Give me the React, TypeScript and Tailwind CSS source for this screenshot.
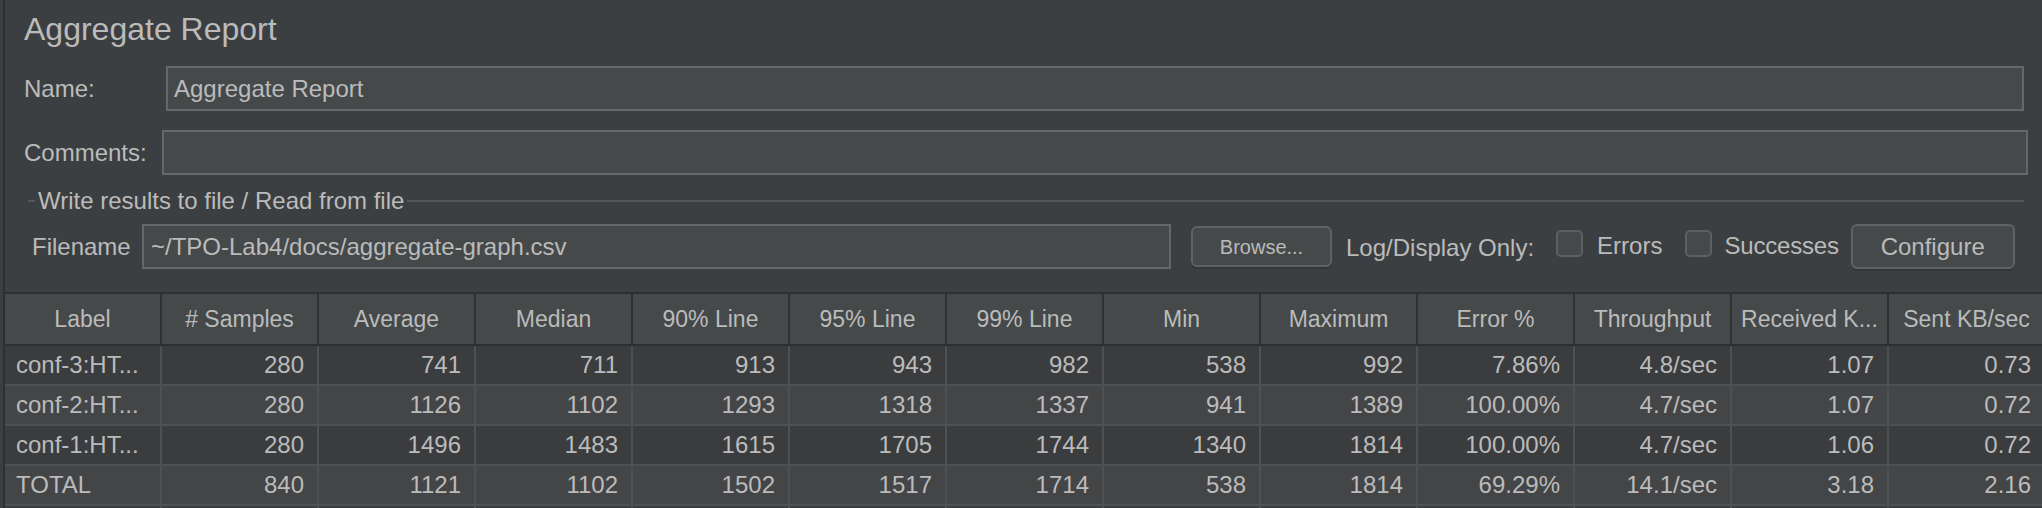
import React from "react";

const cols = [
  "Label",
  "# Samples",
  "Average",
  "Median",
  "90% Line",
  "95% Line",
  "99% Line",
  "Min",
  "Maximum",
  "Error %",
  "Throughput",
  "Received K...",
  "Sent KB/sec",
];

const rows: string[][] = [
  ["conf-3:HT...", "280", "741", "711", "913", "943", "982", "538", "992", "7.86%", "4.8/sec", "1.07", "0.73"],
  ["conf-2:HT...", "280", "1126", "1102", "1293", "1318", "1337", "941", "1389", "100.00%", "4.7/sec", "1.07", "0.72"],
  ["conf-1:HT...", "280", "1496", "1483", "1615", "1705", "1744", "1340", "1814", "100.00%", "4.7/sec", "1.06", "0.72"],
  ["TOTAL", "840", "1121", "1102", "1502", "1517", "1714", "538", "1814", "69.29%", "14.1/sec", "3.18", "2.16"],
  ["", "", "", "", "", "", "", "", "", "", "", "", ""],
];

function Checkbox() {
  return (
    <div className="w-[27px] h-[27px] rounded-[5px] border-2 border-[#5d6063] bg-[#45494a] self-start mt-[6px] shrink-0" />
  );
}

export default function App() {
  return (
    <div
      className="w-[2042px] h-[508px] overflow-hidden bg-[#3c3f41] flex text-[#bbbbbb]"
      style={{ fontFamily: '"Liberation Sans", Arial, sans-serif' }}
    >
      <div className="w-[3px] shrink-0" />
      <div className="w-[2px] shrink-0 bg-[#2d2f31]" />
      <div className="flex-1 min-w-0 flex flex-col">
        {/* Title */}
        <div className="h-[57px] flex items-center pl-[19px] text-[32px] leading-none shrink-0">
          Aggregate Report
        </div>

        {/* Name */}
        <div className="mt-[9px] h-[45px] flex items-center pl-[19px] pr-[18px] shrink-0">
          <div className="w-[142px] text-[24px] leading-none shrink-0">Name:</div>
          <div className="flex-1 h-full bg-[#45494a] border-2 border-[#666768] flex items-center pl-[6px] text-[24px] leading-none">
            Aggregate Report
          </div>
        </div>

        {/* Comments */}
        <div className="mt-[19px] h-[45px] flex items-center pl-[19px] pr-[14px] shrink-0">
          <div className="w-[138px] text-[24px] leading-none shrink-0">Comments:</div>
          <div className="flex-1 h-full bg-[#45494a] border-2 border-[#666768]" />
        </div>

        {/* Group header */}
        <div className="mt-[16px] h-[20px] flex items-center pl-[23px] pr-[18px] shrink-0">
          <div className="w-[7px] h-[2px] bg-[#545658] shrink-0" />
          <div className="ml-[3px] text-[24px] leading-none whitespace-nowrap">
            Write results to file / Read from file
          </div>
          <div className="ml-[3px] flex-1 h-[2px] bg-[#545658]" />
        </div>

        {/* Filename row */}
        <div className="mt-[13px] h-[45px] flex items-center pl-[27px] shrink-0 whitespace-nowrap">
          <div className="w-[110px] text-[24px] leading-none shrink-0">Filename</div>
          <div className="w-[1029px] h-full bg-[#45494a] border-2 border-[#666768] flex items-center pl-[7px] text-[24px] leading-none shrink-0">
            ~/TPO-Lab4/docs/aggregate-graph.csv
          </div>
          <div className="ml-[20px] w-[141px] h-[41px] rounded-[6px] border-2 border-[#606264] bg-[#45494a] shadow-[0_2px_0_#333537] flex items-center justify-center text-[20px] leading-none shrink-0">
            Browse...
          </div>
          <div className="ml-[14px] text-[24px] leading-none mt-[3px]">Log/Display Only:</div>
          <div className="ml-[22px] flex items-center h-full">
            <Checkbox />
          </div>
          <div className="ml-[14px] text-[24px] leading-none mb-[2px]">Errors</div>
          <div className="ml-[23px] flex items-center h-full">
            <Checkbox />
          </div>
          <div className="ml-[12px] text-[24px] leading-none mb-[2px] tracking-[-0.2px]">Successes</div>
          <div className="ml-[12px] w-[164px] h-[45px] rounded-[6px] border-2 border-[#606264] bg-[#45494a] shadow-[0_2px_0_#333537] flex items-center justify-center text-[24px] leading-none shrink-0">
            Configure
          </div>
        </div>

        {/* Table */}
        <div className="mt-[23px] shrink-0 w-[2041px]">
          <div className="flex border-t-2 border-b-2 border-[#2d2f31] bg-[#45494a]">
            {cols.map((c, i) => (
              <div
                key={i}
                className="w-[157px] h-[50px] shrink-0 flex items-center justify-center border-r-2 border-[#2f3133] text-[23px] leading-none whitespace-nowrap"
              >
                {c}
              </div>
            ))}
          </div>
          {rows.map((r, ri) => (
            <div
              key={ri}
              className={`flex border-b-2 border-[#4e5153] ${ri % 2 === 0 ? "bg-[#3a3c3e]" : "bg-[#434547]"}`}
            >
              {r.map((v, ci) => (
                <div
                  key={ci}
                  className={`w-[157px] h-[38px] shrink-0 flex items-center border-r-2 border-[#4e5153] text-[24px] leading-none whitespace-nowrap ${
                    ci === 0 ? "justify-start pl-[11px]" : "justify-end pr-[13px]"
                  }`}
                >
                  {v}
                </div>
              ))}
            </div>
          ))}
        </div>
      </div>
    </div>
  );
}
